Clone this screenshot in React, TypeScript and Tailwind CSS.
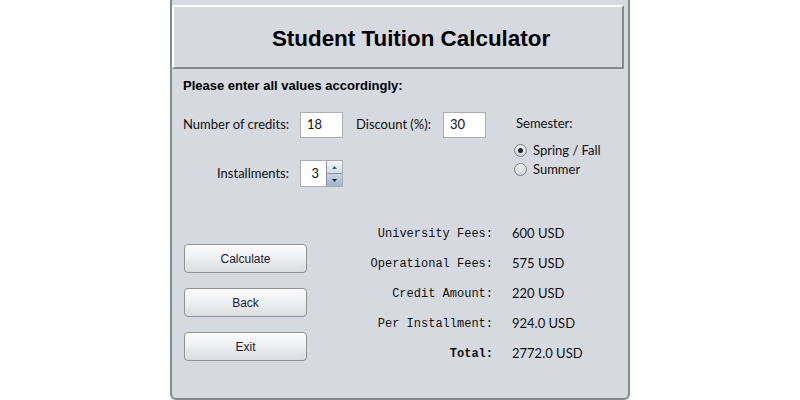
import React from 'react';

const uiFont = { fontFamily: 'Lato, "Noto Sans", "Liberation Sans", sans-serif' };

const TextBox: React.FC<{ value: string }> = ({ value }) => (
  <div className="flex h-[26px] w-[43px] items-center border border-[#abadb3] bg-white pl-[6px] text-[13px] text-[#111]">
    {value}
  </div>
);

const Radio: React.FC<{ label: string; checked?: boolean }> = ({ label, checked }) => (
  <div className="flex h-[19px] items-center gap-[6px]">
    <span className="flex h-[13px] w-[13px] items-center justify-center rounded-full border border-[#7c7f86] bg-gradient-to-b from-[#f2f2f2] to-[#d0d3d8]">
      {checked && <span className="h-[5px] w-[5px] rounded-full bg-[#1f2530]" />}
    </span>
    <span className="whitespace-nowrap text-[13px] text-[#111]">{label}</span>
  </div>
);

const Button: React.FC<{ label: string }> = ({ label }) => (
  <button
    className="flex h-[29px] w-[123px] items-center justify-center rounded-[4px] border border-[#8e9196] bg-gradient-to-b from-[#fbfbfc] via-[#eeeff1] to-[#d9dbde] text-[12px] text-[#1c1c2c] shadow-[inset_0_1px_0_#ffffff]"
    style={{ fontFamily: '"Liberation Sans", Arial, sans-serif' }}
  >
    {label}
  </button>
);

const results: { label: string; value: string; bold?: boolean }[] = [
  { label: 'University Fees:', value: '600 USD' },
  { label: 'Operational Fees:', value: '575 USD' },
  { label: 'Credit Amount:', value: '220 USD' },
  { label: 'Per Installment:', value: '924.0 USD' },
  { label: 'Total:', value: '2772.0 USD', bold: true },
];

export default function App() {
  return (
    <div className="flex h-[400px] w-[800px] justify-center bg-white" style={uiFont}>
      <div className="flex h-[400px] w-[460px] flex-col rounded-b-[6px] border-x-2 border-b-2 border-[#85888d] bg-[#d6d9e0]">
        {/* Title panel */}
        <div className="mt-[5px] flex h-[64px] w-[452px] items-center justify-center border-2 border-t-white border-l-white border-r-[#878a90] border-b-[#878a90] pl-[26px] pt-[4px]">
          <h1
            className="text-[22.4px] font-bold text-black"
            style={{ fontFamily: '"Liberation Sans", Arial, sans-serif' }}
          >
            Student Tuition Calculator
          </h1>
        </div>

        <div className="pl-[11px]">
          <p
            className="mt-[9px] h-[16px] text-[13px] font-bold leading-[16px] text-black"
            style={{ fontFamily: '"Liberation Sans", Arial, sans-serif' }}
          >
            Please enter all values accordingly:
          </p>

          {/* Inputs */}
          <div className="mt-[18px] flex">
            <div className="flex flex-col gap-[22px]">
              <div className="flex items-center">
                <span className="w-[117px] whitespace-nowrap pr-[12px] text-right text-[13px] text-[#111]">Number of credits:</span>
                <TextBox value="18" />
                <span className="ml-[13px] w-[87px] whitespace-nowrap text-[13px] text-[#111]">Discount (%):</span>
                <TextBox value="30" />
              </div>
              <div className="flex items-center">
                <span className="w-[117px] whitespace-nowrap pr-[11px] text-right text-[13px] text-[#111]">Installments:</span>
                <div className="flex h-[27px] w-[43px] border border-[#abadb3] bg-white">
                  <div className="flex flex-1 items-center justify-end pr-[7px] text-[13px] text-[#111]">3</div>
                  <div className="flex w-[16px] flex-col rounded-r-[2px] border-l border-[#8d9299]">
                    <div className="flex flex-1 items-center justify-center border-b border-[#8d9299] bg-gradient-to-b from-[#f3f6fa] to-[#d5dde7]">
                      <svg width="5" height="3" viewBox="0 0 5 3"><path d="M0 3 L2.5 0 L5 3 Z" fill="#4a5a70" /></svg>
                    </div>
                    <div className="flex flex-1 items-center justify-center bg-gradient-to-b from-[#c9d6e6] to-[#9fb4cc]">
                      <svg width="5" height="3" viewBox="0 0 5 3"><path d="M0 0 L2.5 3 L5 0 Z" fill="#1c2736" /></svg>
                    </div>
                  </div>
                </div>
              </div>
            </div>

            <div className="ml-[28px] flex flex-col">
              <span className="mt-[3px] ml-[2px] h-[16px] whitespace-nowrap text-[13px] leading-[16px] text-[#111]">Semester:</span>
              <div className="mt-[10px] flex flex-col">
                <Radio label="Spring / Fall" checked />
                <Radio label="Summer" />
              </div>
            </div>
          </div>

          {/* Buttons and results */}
          <div className="mt-[32px] flex">
            <div className="ml-[1px] flex flex-col gap-[15px] pt-[25px]">
              <Button label="Calculate" />
              <Button label="Back" />
              <Button label="Exit" />
            </div>
            <div className="ml-[20px] flex flex-col">
              {results.map((r) => (
                <div key={r.label} className="flex h-[30px] items-center">
                  <span
                    className={`w-[166px] whitespace-pre text-right text-[12px] text-[#111] ${r.bold ? 'font-bold' : 'font-medium'}`}
                    style={{ fontFamily: '"Liberation Mono", "Courier New", monospace' }}
                  >
                    {r.label}
                  </span>
                  <span className="ml-[19px] whitespace-nowrap text-[13px] text-[#111]">{r.value}</span>
                </div>
              ))}
            </div>
          </div>
        </div>
      </div>
    </div>
  );
}
